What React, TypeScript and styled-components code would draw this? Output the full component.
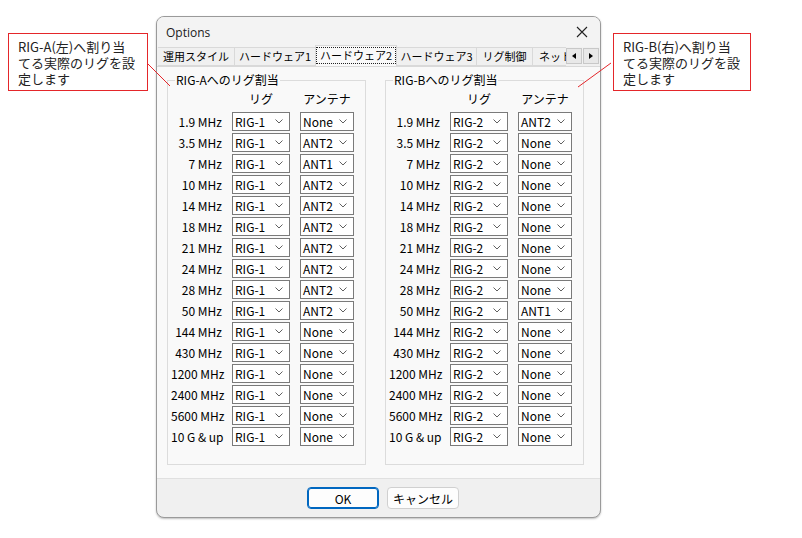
import React from "react";
import styled, { createGlobalStyle } from "styled-components";

const Global = createGlobalStyle`
  html, body { margin: 0; padding: 0; background: #ffffff; }
  body { font-family: "Noto Sans CJK JP", "Noto Sans", sans-serif; }
`;

const Page = styled.div`
  position: relative;
  width: 802px;
  height: 538px;
  display: flex;
  align-items: flex-start;
  padding: 16px 0 0 8px;
  box-sizing: border-box;
  overflow: hidden;
`;

const Callout = styled.div<{ $gap: number; $w: number }>`
  margin-top: 17px;
  margin-left: ${(p) => p.$gap}px;
  width: ${(p) => p.$w}px;
  height: 58px;
  box-sizing: border-box;
  border: 1px solid #e4262a;
  background: #fff;
  padding: 5px 0 0 9px;
  font-family: "Noto Sans CJK JP", sans-serif;
`;

const CalloutLine = styled.div`
  font-size: 13px;
  line-height: 16px;
  color: #222;
  white-space: nowrap;
`;

const Dialog = styled.div`
  margin-left: 8px;
  width: 445px;
  height: 502px;
  box-sizing: border-box;
  border: 1px solid #9a9a9a;
  border-radius: 8px;
  background: #f0f0f0;
  box-shadow: 0 1px 2px rgba(0, 0, 0, 0.25);
  display: flex;
  flex-direction: column;
  overflow: hidden;
`;

const TitleBar = styled.div`
  height: 30px;
  display: flex;
  align-items: center;
  justify-content: space-between;
  padding: 0 10px 0 9px;
  font-family: "Open Sans", "Noto Sans", sans-serif;
  font-size: 12px;
  color: #1a1a1a;
  background: #f3f3f3;
`;

const CloseBtn = styled.svg`
  width: 12px;
  height: 12px;
  margin-right: 2px;
`;

const TabStrip = styled.div`
  height: 19px;
  display: flex;
  align-items: flex-end;
  padding-left: 1px;
  position: relative;
  z-index: 1;
`;

const TabsClip = styled.div`
  display: flex;
  width: 410px;
  height: 21px;
  overflow: hidden;
  align-items: flex-end;
`;

const Tab = styled.div<{ $w: number; $active?: boolean }>`
  flex: none;
  width: ${(p) => p.$w}px;
  height: ${(p) => (p.$active ? 21 : 19)}px;
  box-sizing: border-box;
  border: 1px solid #d9d9d9;
  border-bottom: ${(p) => (p.$active ? "none" : "1px solid #d9d9d9")};
  margin-left: -1px;
  background: ${(p) => (p.$active ? "#f9f9f9" : "#f0f0f0")};
  font-size: 11px;
  line-height: 17px;
  color: #000;
  display: flex;
  align-items: flex-start;
  justify-content: center;
  padding-top: ${(p) => (p.$active ? 1 : 0)}px;
  white-space: nowrap;
  overflow: hidden;
  position: relative;
  z-index: ${(p) => (p.$active ? 2 : 1)};
`;

const FocusBox = styled.span`
  border: 1px dotted #222;
  padding: 0 3px;
  line-height: 15px;
`;

const ScrollBtns = styled.div`
  display: flex;
  margin-bottom: 2px;
`;

const ScrollBtn = styled.div`
  width: 16px;
  height: 16px;
  box-sizing: border-box;
  border: 1px solid #c8c8c8;
  background: #e8e8e8;
  display: flex;
  align-items: center;
  justify-content: center;
  margin-right: 1px;
`;

const Panel = styled.div`
  height: 413px;
  box-sizing: border-box;
  border-top: 1px solid #d9d9d9;
  border-bottom: 1px solid #e0e0e0;
  background: #f9f9f9;
  display: flex;
  gap: 19px;
  padding: 5px 0 0 10px;
`;

const Group = styled.fieldset`
  margin: 0;
  width: 199px;
  height: 393px;
  box-sizing: border-box;
  border: 1px solid #dcdcdc;
  padding: 2px 0 0 3px;
  min-width: 0;
`;

const Legend = styled.legend`
  font-size: 12px;
  line-height: 16px;
  padding: 0 1px;
  margin-left: 4px;
  color: #000;
`;

const Grid = styled.div`
  display: grid;
  grid-template-columns: 51px 58px 54px;
  column-gap: 10px;
  row-gap: 2px;
  align-items: center;
`;

const Head = styled.div`
  font-size: 12px;
  height: 20px;
  line-height: 18px;
  text-align: center;
  color: #000;
`;

const Label = styled.div`
  font-size: 12px;
  text-align: right;
  white-space: nowrap;
  color: #000;
`;

const Select = styled.div`
  height: 19px;
  box-sizing: border-box;
  border: 1px solid #7a7a7a;
  background: #fff;
  display: flex;
  align-items: center;
  justify-content: space-between;
  padding: 0 6px 0 2px;
  font-size: 12px;
  color: #000;
`;

const Chev = styled.svg`
  width: 8px;
  height: 5px;
`;

const Footer = styled.div`
  flex: 1;
  display: flex;
  justify-content: center;
  align-items: flex-start;
  gap: 8px;
  padding: 8px 0 0 9px;
`;

const Button = styled.div<{ $primary?: boolean }>`
  width: 72px;
  height: 22px;
  box-sizing: border-box;
  border-radius: 4px;
  border: ${(p) => (p.$primary ? "1px solid #0067c0" : "1px solid #d0d0d0")};
  box-shadow: ${(p) => (p.$primary ? "inset 0 0 0 1px #0067c0" : "none")};
  background: #fdfdfd;
  font-size: 12px;
  display: flex;
  align-items: center;
  justify-content: center;
  color: #000;
`;

const Overlay = styled.svg`
  position: absolute;
  left: 0;
  top: 0;
  width: 802px;
  height: 538px;
  pointer-events: none;
`;

const bands = [
  "1.9 MHz", "3.5 MHz", "7 MHz", "10 MHz", "14 MHz", "18 MHz", "21 MHz", "24 MHz",
  "28 MHz", "50 MHz", "144 MHz", "430 MHz", "1200 MHz", "2400 MHz", "5600 MHz", "10 G & up",
];
const antA = ["None", "ANT2", "ANT1", "ANT2", "ANT2", "ANT2", "ANT2", "ANT2", "ANT2", "ANT2",
  "None", "None", "None", "None", "None", "None"];
const antB = ["ANT2", "None", "None", "None", "None", "None", "None", "None", "None", "ANT1",
  "None", "None", "None", "None", "None", "None"];

const Dropdown = ({ value }: { value: string }) => (
  <Select>
    <span>{value}</span>
    <Chev viewBox="0 0 8 5">
      <polyline points="0.5,0.5 4,4 7.5,0.5" fill="none" stroke="#606060" strokeWidth="1" />
    </Chev>
  </Select>
);

const RigGroup = ({ title, rig, ants }: { title: string; rig: string; ants: string[] }) => (
  <Group>
    <Legend>{title}</Legend>
    <Grid>
      <div />
      <Head>リグ</Head>
      <Head>アンテナ</Head>
      {bands.map((b, i) => (
        <React.Fragment key={b}>
          <Label>{b}</Label>
          <Dropdown value={rig} />
          <Dropdown value={ants[i]} />
        </React.Fragment>
      ))}
    </Grid>
  </Group>
);

const tabs: { t: string; w: number; active?: boolean }[] = [
  { t: "運用スタイル", w: 78 },
  { t: "ハードウェア1", w: 82 },
  { t: "ハードウェア2", w: 82, active: true },
  { t: "ハードウェア3", w: 81 },
  { t: "リグ制御", w: 57 },
  { t: "ネットワーク", w: 80 },
];

const CalloutText = ({ lines }: { lines: string[] }) => (
  <>
    {lines.map((l) => (
      <CalloutLine key={l}>{l}</CalloutLine>
    ))}
  </>
);

export default function App() {
  return (
    <>
      <Global />
      <Page>
        <Callout $gap={0} $w={140}>
          <CalloutText lines={["RIG-A(左)へ割り当", "てる実際のリグを設", "定します"]} />
        </Callout>
        <Dialog>
          <TitleBar>
            <span>Options</span>
            <CloseBtn viewBox="0 0 12 12">
              <path d="M1 1 L11 11 M11 1 L1 11" stroke="#222" strokeWidth="1.1" fill="none" />
            </CloseBtn>
          </TitleBar>
          <TabStrip>
            <TabsClip>
              {tabs.map((t) => (
                <Tab key={t.t} $w={t.w} $active={t.active}>
                  {t.active ? <FocusBox>{t.t}</FocusBox> : t.t}
                </Tab>
              ))}
            </TabsClip>
            <ScrollBtns>
              <ScrollBtn>
                <svg width="4" height="6" viewBox="0 0 4 6">
                  <polygon points="4,0 0,3 4,6" fill="#000" />
                </svg>
              </ScrollBtn>
              <ScrollBtn>
                <svg width="4" height="6" viewBox="0 0 4 6">
                  <polygon points="0,0 4,3 0,6" fill="#000" />
                </svg>
              </ScrollBtn>
            </ScrollBtns>
          </TabStrip>
          <Panel>
            <RigGroup title="RIG-Aへのリグ割当" rig="RIG-1" ants={antA} />
            <RigGroup title="RIG-Bへのリグ割当" rig="RIG-2" ants={antB} />
          </Panel>
          <Footer>
            <Button $primary>OK</Button>
            <Button>キャンセル</Button>
          </Footer>
        </Dialog>
        <Callout $gap={12} $w={138}>
          <CalloutText lines={["RIG-B(右)へ割り当", "てる実際のリグを設", "定します"]} />
        </Callout>
        <Overlay viewBox="0 0 802 538">
          <line x1="148" y1="64" x2="170" y2="86" stroke="#e4262a" strokeWidth="1" />
          <line x1="611" y1="63" x2="578" y2="87" stroke="#e4262a" strokeWidth="1" />
        </Overlay>
      </Page>
    </>
  );
}
